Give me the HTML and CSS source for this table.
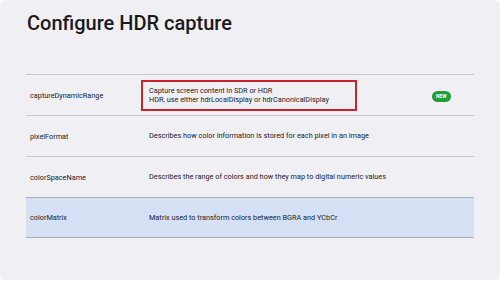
FILE: index.html
```html
<!DOCTYPE html>
<html lang="en">
  <head>
    <meta charset="UTF-8" />
    <meta name="viewport" content="width=device-width, initial-scale=1.0" />
    <title>Configure HDR capture</title>
    <link rel="stylesheet" href="styles.css">
  </head>

  <body>
    <div class="slide">
      <h1>Configure HDR capture</h1>

      <!-- Property table -->
      <div class="props">
        <div class="prop-row">
          <span class="prop-name">captureDynamicRange</span>
          <span class="prop-desc callout">
            Capture screen content in SDR or HDR<br />
            HDR, use either hdrLocalDisplay or hdrCanonicalDisplay
          </span>
          <span class="badge">NEW</span>
        </div>
        <div class="prop-row">
          <span class="prop-name">pixelFormat</span>
          <span class="prop-desc">Describes how color information is stored for each pixel in an image</span>
        </div>
        <div class="prop-row">
          <span class="prop-name">colorSpaceName</span>
          <span class="prop-desc">Describes the range of colors and how they map to digital numeric values</span>
        </div>
        <div class="prop-row selected">
          <span class="prop-name">colorMatrix</span>
          <span class="prop-desc">Matrix used to transform colors between BGRA and YCbCr</span>
        </div>
      </div>
    </div>
  </body>
</html>
```

FILE: styles.css
```css
:root {
  --slide-bg: #f0eff4;
  --text-color: #222226;
  --row-line: #c9c9d0;
  --selected-bg: #d5e0f4;
  --selected-line: #a8adbc;
  --callout-red: #c9232b;
  --badge-green: #1f9e3a;
}

* {
  box-sizing: border-box;
  margin: 0;
  padding: 0;
}

body {
  background-color: #fff;
  font-family: Roboto, "Noto Sans", sans-serif;
  color: var(--text-color);
}

.slide {
  height: 280px;
  background-color: var(--slide-bg);
  border-radius: 6px;
  padding: 10px 26px 0 26px;
  box-shadow: 0 1px 2px rgba(0, 0, 0, 0.05);
}

h1 {
  font-size: 20px;
  font-weight: 500;
  line-height: 26px;
  margin-left: 1px;
  height: 64px;
  color: #1a1a1c;
}

.props {
  border-top: 1px solid var(--row-line);
}

.prop-row {
  display: flex;
  align-items: center;
  height: 41px;
  border-bottom: 1px solid var(--row-line);
  font-size: 7.3px;
  position: relative;
}

.prop-name {
  width: 123px;
  padding-left: 4px;
}

.prop-desc {
  line-height: 10px;
  white-space: nowrap;
}

.callout {
  border: 2px solid var(--callout-red);
  margin-left: -8px;
  padding: 4px 6px;
  width: 216px;
  height: 31px;
  line-height: 9.5px;
}

.badge {
  position: absolute;
  left: 406px;
  top: 16px;
  background-color: var(--badge-green);
  color: #fff;
  font-size: 5px;
  font-weight: 700;
  padding: 2px 4px;
  border-radius: 6px;
  line-height: 7px;
}

.prop-row.selected {
  background-color: var(--selected-bg);
  border-top: 1px solid var(--selected-line);
  border-bottom: 1px solid var(--selected-line);
  margin-top: -1px;
}
```
